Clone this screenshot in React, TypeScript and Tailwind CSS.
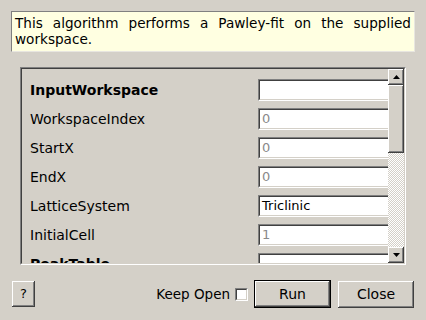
import React from "react";

const raised =
  "shadow-[inset_-1px_-1px_0_#404040,inset_1px_1px_0_#ffffff,inset_-2px_-2px_0_#808080]";

function Field({ value, muted }: { value: string; muted?: boolean }) {
  return (
    <div className="w-[150px] h-[22px] shrink-0 border-t border-l border-[#808080] border-b-white border-r-white border-b border-r">
      <div className="w-full h-full bg-white border-t border-l border-[#404040] border-b-[#d4d0c8] border-r-[#d4d0c8] border-b border-r flex items-center pl-[2px] text-[13px]">
        <span className={muted ? "text-[#8a8a8a]" : "text-black"}>{value}</span>
      </div>
    </div>
  );
}

function Row({ label, value, bold, muted }: { label: string; value: string; bold?: boolean; muted?: boolean }) {
  return (
    <div className="flex items-center h-[22px] shrink-0">
      <div className={"w-[228px] shrink-0 text-[14px] " + (bold ? "font-bold" : "")}>{label}</div>
      <Field value={value} muted={muted} />
    </div>
  );
}

function Arrow({ up }: { up?: boolean }) {
  return (
    <div className={"w-[16px] h-[16px] bg-[#d4d0c8] flex items-center justify-center shrink-0 " + raised}>
      <svg width="7" height="4" viewBox="0 0 7 4">
        {up ? <polygon points="3.5,0 7,4 0,4" fill="#000" /> : <polygon points="0,0 7,0 3.5,4" fill="#000" />}
      </svg>
    </div>
  );
}

export default function App() {
  return (
    <div
      className="w-[426px] h-[320px] bg-[#d4d0c8] flex flex-col text-[13px] text-black overflow-hidden"
      style={{ fontFamily: '"DejaVu Sans", sans-serif' }}
    >
      <div className="mx-[11px] mt-[11px] h-[41px] bg-[#ffffe1] border-t border-l border-[#808080] border-b-[#e8e6e0] border-r-[#e8e6e0] border-b border-r px-[3px] pt-[3px] leading-[16px] text-justify text-[13.6px]">
        This algorithm performs a Pawley-fit on the supplied workspace.
      </div>

      <div className="ml-[20px] mt-[15px] w-[386px] h-[198px] border-t border-l border-[#808080] border-b border-r border-b-white border-r-white">
        <div className="w-full h-full border-t border-l border-[#404040] border-b border-r border-b-[#d4d0c8] border-r-[#d4d0c8] flex">
          <div className="flex-1 overflow-hidden flex flex-col gap-[7px] pt-[10px] pl-[8px]">
            <Row label="InputWorkspace" value="" bold />
            <Row label="WorkspaceIndex" value="0" muted />
            <Row label="StartX" value="0" muted />
            <Row label="EndX" value="0" muted />
            <Row label="LatticeSystem" value="Triclinic" />
            <Row label="InitialCell" value="1" muted />
            <Row label="PeakTable" value="" bold />
          </div>
          <div className="w-[16px] flex flex-col shrink-0">
            <Arrow up />
            <div className={"w-[16px] h-[68px] bg-[#d4d0c8] shrink-0 " + raised} />
            <div className="flex-1 bg-[repeating-conic-gradient(#ffffff_0_25%,#d4d0c8_0_50%)] bg-[length:2px_2px]" />
            <Arrow />
          </div>
        </div>
      </div>

      <div className="flex items-center mt-[15px] pl-[12px] pr-[12px]">
        <div className={"w-[23px] h-[26px] bg-[#d4d0c8] flex items-center justify-center text-[13px] " + raised}>?</div>
        <div className="flex-1" />
        <span className="text-[13.5px]">Keep Open</span>
        <div className="ml-[5px] w-[13px] h-[13px] border-t border-l border-[#808080] border-b border-r border-b-white border-r-white">
          <div className="w-full h-full bg-white border-t border-l border-[#404040] border-b border-r border-b-[#d4d0c8] border-r-[#d4d0c8]" />
        </div>
        <div className="ml-[6px] w-[77px] h-[28px] border border-black">
          <div className={"w-full h-full bg-[#d4d0c8] flex items-center justify-center text-[14px] " + raised}>Run</div>
        </div>
        <div className={"ml-[7px] w-[76px] h-[27px] bg-[#d4d0c8] flex items-center justify-center text-[14px] " + raised}>Close</div>
      </div>
    </div>
  );
}
